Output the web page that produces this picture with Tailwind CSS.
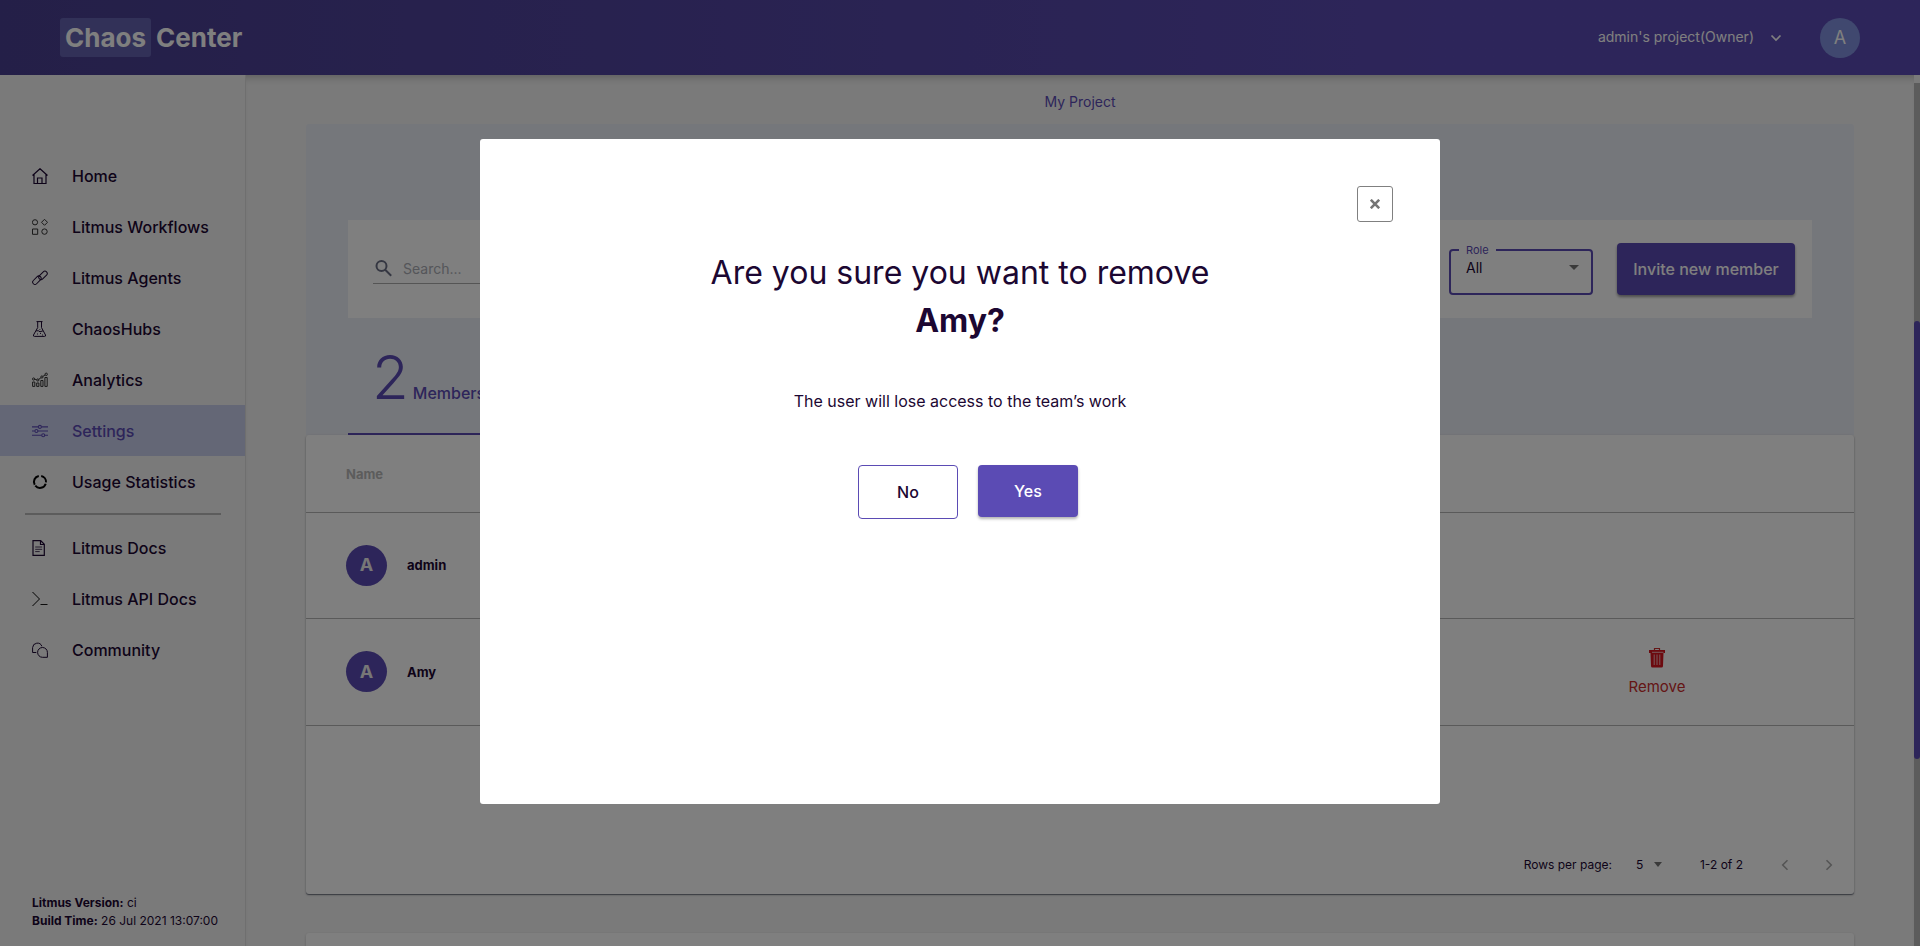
<!DOCTYPE html>
<html lang="en">
<head>
<meta charset="utf-8">
<meta name="viewport" content="width=device-width, initial-scale=1">
<title>Chaos Center</title>
<script src="https://cdn.jsdelivr.net/npm/@tailwindcss/browser@4"></script>
</head>
<body class="flex h-screen flex-col overflow-hidden bg-[#f5f5f5] font-['Inter',sans-serif] text-[#1c0732]">

<header class="relative z-10 flex h-[75px] shrink-0 items-center justify-between bg-linear-to-r from-[#493f90] to-[#5b4bb4] to-75% pr-15 pl-15 text-white">
  <a href="#" class="flex items-center gap-[5px] text-[26px] leading-[39px] font-bold"><span class="rounded-[3px] bg-[#6563b0] px-[5px]">Chaos</span><span>Center</span></a>
  <div class="flex items-center">
    <button type="button" class="flex items-center gap-4 pb-0.5 text-sm">
      <span>admin's project(Owner)</span>
      <svg class="mt-0.5 size-3" viewBox="0 0 12 12" fill="none" stroke="currentColor" stroke-width="1.700"><path d="M1.500 3.500 6 8l4.500-4.500"/></svg>
    </button>
    <button type="button" class="ml-[38px] size-10 rounded-full bg-[#8091de] text-lg">A</button>
  </div>
</header>

<div class="flex min-h-0 flex-1">
  <aside class="flex w-[246px] shrink-0 flex-col border-r border-[#dedede] bg-[#f5f5f5] pt-[75px] pb-4">
    <nav class="flex flex-col text-base font-medium">
      <a href="#" class="flex h-[51px] items-center gap-6 pl-8">
        <svg class="size-4" viewBox="0 0 16 16" fill="none" stroke="currentColor" stroke-width="1.200"><path d="M.5 7.500 8 .7l7.500 6.800M2 6.500v9h12v-9M5.500 15.500v-5.500h4.500v5.500"/></svg>Home</a>
      <a href="#" class="flex h-[51px] items-center gap-6 pl-8">
        <svg class="size-4 text-[#333]" viewBox="0 0 16 16" fill="none" stroke="currentColor"><circle cx="3" cy="3.300" r="2.600"/><path d="M12.500.3l3 3-3 3-3-3zM.5 10h5.200v5.300H.5z"/><circle cx="12.500" cy="12.600" r="2.700"/></svg>Litmus Workflows</a>
      <a href="#" class="flex h-[51px] items-center gap-6 pl-8">
        <svg class="size-4" viewBox="0 0 16 16" fill="none" stroke="currentColor"><rect x="-5" y="-2.300" width="10" height="4.600" rx="2.300" transform="translate(4.900 10.200) rotate(-45)"/><rect x="-5" y="-2.300" width="10" height="4.600" rx="2.300" transform="translate(11 5.400) rotate(-45)"/></svg>Litmus Agents</a>
      <a href="#" class="flex h-[51px] items-center gap-6 pl-8">
        <svg class="size-4" viewBox="0 0 16 16" fill="none" stroke="currentColor"><path d="M4.500.6h6M5.700.6v6L1.500 14q-.5 1.400 1 1.400h10q1.500 0 1-1.400L9.500 6.600v-6M4 9.800h2.500l1.500 1 3-1"/><path d="M5 13h1M8 12.500h1M10 14h1M7.500 8.500h.8" stroke-width=".9"/></svg>ChaosHubs</a>
      <a href="#" class="flex h-[51px] items-center gap-6 pl-8">
        <svg class="size-4 text-[#333]" viewBox="0 0 16 16" fill="none" stroke="currentColor"><path d="M.6 10h2.200v4.400H.6zM4.700 11h2.200v3.400H4.700zM8.800 8.500H11v5.900H8.800zM12.900 5.500h2.300v8.900h-2.300z"/><circle cx="1.600" cy="7" r="1.100"/><circle cx="5.800" cy="8" r="1.100"/><circle cx="9.900" cy="5" r="1.100"/><circle cx="14.200" cy="2.300" r="1.200"/><path d="m2.700 7.200 2 .5M6.700 7.400l2.400-1.800M10.900 4.400l2.300-1.500"/></svg>Analytics</a>
      <a href="#" aria-current="page" class="flex h-[51px] items-center gap-6 bg-[#c9ceec] pl-8 text-[#5b4bb4]">
        <svg class="size-4" viewBox="0 0 16 16" fill="none" stroke="currentColor" stroke-width="1.100"><path d="M0 3.900h6.200M9.500 3.900H16M0 8h2.800M6 8h10M0 12.200h9.500M12.800 12.200H16"/><circle cx="7.900" cy="3.900" r="1.500"/><circle cx="4.400" cy="8" r="1.500"/><circle cx="11.200" cy="12.200" r="1.500"/></svg>Settings</a>
      <a href="#" class="flex h-[51px] items-center gap-6 pl-8">
        <svg class="size-4 text-black" viewBox="0 0 16 16" fill="none" stroke="currentColor" stroke-width="2"><path d="M9.200 1.900A6 6 0 0 1 14 8.400M13.700 9.700A6 6 0 0 1 3.300 11.700M2.700 10.700A6 6 0 0 1 6.800 1.900"/></svg>Usage Statistics</a>
      <hr class="mt-1.5 mr-6 mb-[7px] ml-[25px] border-t-2 border-[#b8b8b8]">
      <a href="#" class="flex h-[51px] items-center gap-6 pl-8">
        <svg class="size-4" viewBox="0 0 16 16" fill="none" stroke="currentColor"><path d="M1 .6h7.700l3.600 3.700v11H1zM8.500.8v3.700h3.700" stroke-width="1.200"/><path d="M3.200 7h7M3.200 9.300h7M3.200 11.600h4.500" stroke-width=".8"/></svg>Litmus Docs</a>
      <a href="#" class="flex h-[51px] items-center gap-6 pl-8">
        <svg class="size-4 text-black" viewBox="0 0 16 16" fill="none" stroke="currentColor"><path d="m.5 1 7 7-7 7"/><path d="M8.500 13.500H15.500" stroke-width=".9"/></svg>Litmus API Docs</a>
      <a href="#" class="flex h-[51px] items-center gap-6 pl-8">
        <svg class="size-4" viewBox="0 0 16 16" fill="none" stroke="currentColor"><path d="M4.300 10.500H.6V5.600a4.800 4.800 0 0 1 9.300-1.300"/><path d="M15.400 15.300h-5a4.900 4.900 0 1 1 5-5z"/></svg>Community</a>
    </nav>
    <div class="mt-auto pl-8 text-xs leading-[18px]">
      <p><b>Litmus Version:</b> ci</p>
      <p><b>Build Time:</b> 26 Jul 2021 13:07:00</p>
    </div>
  </aside>

  <main class="flex min-w-0 flex-1 flex-col overflow-hidden px-15 pt-4 shadow-[inset_0_8px_8px_-6px_rgba(0,0,0,0.25)]">
    <a href="#" class="mb-3 self-center text-sm leading-[21px] text-[#5b4bb4]">My Project</a>
    <section class="shrink-0 rounded-t-[3px] bg-[#ebeef6] px-[42px] pt-24">
      <div class="flex h-[98px] items-center justify-between bg-white pr-[17px] pl-[25px]">
        <label class="flex h-[30px] w-60 items-center gap-2 border-b border-[#aaa] pl-0.5">
          <svg class="size-5 shrink-0 text-[#6b6f85]" viewBox="0 0 20 20" fill="none" stroke="currentColor" stroke-width="2"><circle cx="6.500" cy="7" r="5"/><path d="m10.200 10.700 6 6"/></svg>
          <input type="text" aria-label="Search" placeholder="Search..." class="w-full bg-transparent text-sm outline-none placeholder:text-[#aaacb4]">
        </label>
        <div class="flex items-center gap-6">
          <fieldset class="h-[51px] w-36 rounded border-2 border-[#5b4bb4] px-2">
            <legend class="px-[7px] text-[11px] leading-[12px] text-[#5b4bb4]"><label for="role">Role</label></legend>
            <div class="flex items-center">
              <select id="role" class="w-full appearance-none bg-transparent pl-[7px] text-sm leading-6 outline-none"><option>All</option></select>
              <svg class="mr-1 h-[5px] w-2.5 shrink-0 text-[#757575]" viewBox="0 0 10 5" fill="currentColor"><path d="M0 0h10L5 5z"/></svg>
            </div>
          </fieldset>
          <button type="button" class="h-[52px] w-[178px] rounded bg-[#5b4bb4] text-base font-medium text-white shadow-[0_2px_3px_rgba(0,0,0,0.4)]">Invite new member</button>
        </div>
      </div>
      <div role="tablist" class="flex h-[117px]">
        <button type="button" role="tab" aria-selected="true" class="flex w-60 items-baseline gap-1 border-b-2 border-[#5b4bb4] pt-[23px] pl-6 text-[#5b4bb4]"><span class="text-[60px] leading-[72px] font-light">2</span><span class="text-base font-medium">Members</span></button>
      </div>
    </section>
    <section class="h-[459px] shrink-0 rounded-[3px] bg-white shadow-[0_1px_3px_rgba(0,0,0,0.2),0_1px_1px_#888c9a]">
      <table class="w-full border-collapse text-left text-[13px]">
        <thead>
          <tr class="h-[77px] border-b border-[#b4b4b4]"><th scope="col" class="pt-0.5 pl-10 font-bold text-[#b8b8b8]">Name</th><td class="w-[394px]"></td></tr>
        </thead>
        <tbody>
          <tr class="h-[106px] border-b border-[#b4b4b4]">
            <td class="pl-10"><div class="flex items-center gap-5"><span class="flex size-[41px] items-center justify-center rounded-full bg-[#5b4bb4] text-lg font-bold text-[#eee]">A</span><b class="pt-0.5">admin</b></div></td>
            <td></td>
          </tr>
          <tr class="h-[107px] border-b border-[#b4b4b4]">
            <td class="pl-10"><div class="flex items-center gap-5"><span class="flex size-[41px] items-center justify-center rounded-full bg-[#5b4bb4] text-lg font-bold text-[#eee]">A</span><b class="pt-0.5">Amy</b></div></td>
            <td class="pt-0.5 text-center">
              <button type="button" class="inline-flex flex-col items-center gap-2 text-[15px] leading-[22px] text-[#ca2c2c]">
                <svg class="h-[21px] w-4" viewBox="0 0 16 21" fill="none"><path d="M5.500 3V1.500h5V3" stroke="#ca2c2c" stroke-width="1.200"/><path d="M0 3h16v3H0zM1.500 6h13l-.5 13q0 1.500-1.500 1.500h-9Q2 20.500 2 19z" fill="#d8141f"/><path d="M3 5.300h11.500M5.200 7.500V18M8 7.500V18M10.800 7.500V18" stroke="#f3b6b9"/></svg>
                Remove
              </button>
            </td>
          </tr>
        </tbody>
      </table>
      <div class="flex items-center justify-end pt-[127px] pr-[18px] text-xs leading-6">
        <label for="rows">Rows per page:</label>
        <select id="rows" class="ml-6 w-[18px] appearance-none bg-transparent outline-none"><option>5</option></select>
        <svg class="h-[5px] w-2 text-[#757575]" viewBox="0 0 8 5" fill="currentColor"><path d="M0 0h8L4 5z"/></svg>
        <span class="ml-[38px]">1-2 of 2</span>
        <button type="button" aria-label="Previous page" disabled class="ml-[35px] text-[#aaa]"><svg class="size-3.5" viewBox="0 0 14 14" fill="none" stroke="currentColor" stroke-width="1.600"><path d="M9.500 2.200 4.700 7l4.800 4.800"/></svg></button>
        <button type="button" aria-label="Next page" disabled class="ml-[30px] text-[#aaa]"><svg class="size-3.5" viewBox="0 0 14 14" fill="none" stroke="currentColor" stroke-width="1.600"><path d="M4.500 2.200 9.300 7l-4.800 4.800"/></svg></button>
      </div>
    </section>
    <section class="mt-[39px] h-40 shrink-0 rounded-[3px] bg-white shadow-[0_1px_3px_rgba(0,0,0,0.2)]"></section>
  </main>
  <div class="mt-2 w-1.5 shrink-0 bg-[#b8b8b8] pt-[238px]"><div class="h-[438px] rounded-[3px] bg-[#5b4bb4]"></div></div>
</div>

<div class="fixed inset-0 z-20 flex items-start justify-center bg-black/50 pt-[139px]">
  <div role="dialog" aria-modal="true" aria-labelledby="dlg-title" class="flex h-[665px] w-[960px] max-w-full flex-col rounded-[3px] bg-white px-[47px] pt-[47px]">
    <button type="button" aria-label="Close" class="flex size-9 items-center justify-center self-end rounded-[3px] border border-[#808080] text-[#757575]"><svg class="size-2.5" viewBox="0 0 10 10" fill="none" stroke="currentColor" stroke-width="2.600"><path d="m.8.8 8.400 8.400M9.200.8.800 9.200"/></svg></button>
    <div class="flex flex-col items-center text-center">
      <h2 id="dlg-title" class="mt-[27px] text-[32px] leading-[48px] font-normal">Are you sure you want to remove<br><strong class="font-bold">Amy?</strong></h2>
      <p class="mt-11 text-base leading-6">The user will lose access to the team’s work</p>
      <div class="mt-[52px] ml-4 flex items-start gap-5 text-base font-medium">
        <button type="button" class="h-[54px] w-[100px] rounded border border-[#5b4bb4]">No</button>
        <button type="button" class="h-[52px] w-[100px] rounded bg-[#5b4bb4] text-white shadow-[0_2px_3px_rgba(0,0,0,0.3)]">Yes</button>
      </div>
    </div>
  </div>
</div>
</body>
</html>
